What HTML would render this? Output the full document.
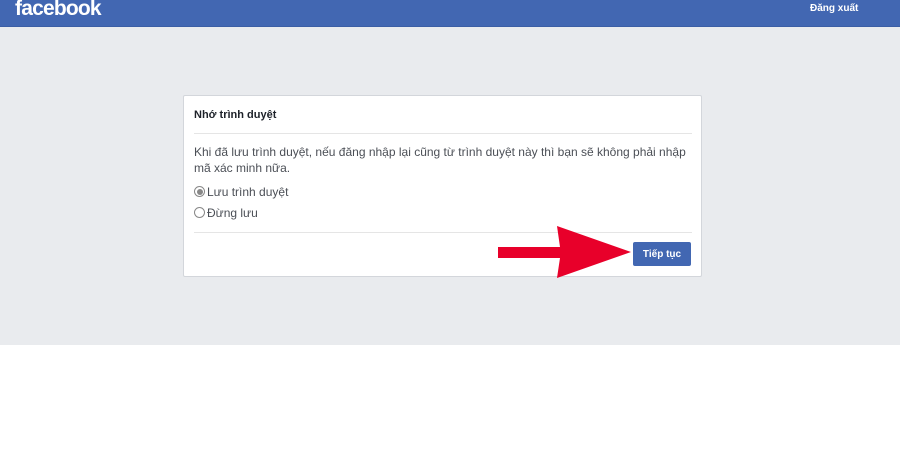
<!DOCTYPE html>
<html><head><meta charset="utf-8"><style>
body{margin:0;width:900px;height:450px;background:#fff;font-family:"Liberation Sans",Arial,sans-serif;position:relative;overflow:hidden}
.hd{position:absolute;left:0;top:0;width:900px;height:26px;background:#4267b2;border-bottom:1px solid #3b5ea5}
.logo{position:absolute;left:15px;top:-3px;color:#fff;font-weight:bold;font-size:21px;letter-spacing:-0.8px}
.out{position:absolute;left:810px;top:3px;color:#fff;font-weight:bold;font-size:10px}
.bg{position:absolute;left:0;top:27px;width:900px;height:318px;background:#e9ebee}
.card{position:absolute;left:183px;top:95px;width:517px;height:180px;background:#fff;border:1px solid #d3d6db;border-radius:2px}
.t{position:absolute;left:10px;top:13px;font-size:11px;font-weight:bold;color:#1d2129}
.l1{position:absolute;left:10px;top:37px;width:498px;height:1px;background:#e5e5e5}
.p{position:absolute;left:10px;top:48px;font-size:12px;line-height:16px;color:#4b4f56;width:505px}
.r{position:absolute;left:10px;font-size:12px;color:#4b4f56}
.rd{display:inline-block;width:11px;height:11px;border:1px solid #888;border-radius:50%;vertical-align:-1px;margin-right:2px;box-sizing:border-box;position:relative}
.rd.on::after{content:"";position:absolute;left:1.5px;top:1.5px;width:6px;height:6px;border-radius:50%;background:#888}
.l2{position:absolute;left:10px;top:136px;width:498px;height:1px;background:#e5e5e5}
.btn{position:absolute;left:449px;top:146px;width:58px;height:24px;background:#4267b2;border:1px solid #4267b2;border-radius:2px;color:#fff;font-weight:bold;font-size:10px;text-align:center;line-height:24px;box-sizing:border-box}
</style></head><body>
<div class="hd"><div class="logo">facebook</div><div class="out">Đăng xuất</div></div>
<div class="bg"></div>
<div class="card">
<div class="t">Nhớ trình duyệt</div><div class="l1"></div>
<div class="p">Khi đã lưu trình duyệt, nếu đăng nhập lại cũng từ trình duyệt này thì bạn sẽ không phải nhập<br>mã xác minh nữa.</div>
<div class="r" style="top:89px"><span class="rd on"></span>Lưu trình duyệt</div>
<div class="r" style="top:110px"><span class="rd"></span>Đừng lưu</div>
<div class="l2"></div>
<div class="btn">Tiếp tục</div>
</div>
<svg style="position:absolute;left:0;top:0" width="900" height="450"><polygon points="498,247 560,247 557,226 631,252 557,278 560,258 498,258" fill="#e8002a"/></svg>
</body></html>
